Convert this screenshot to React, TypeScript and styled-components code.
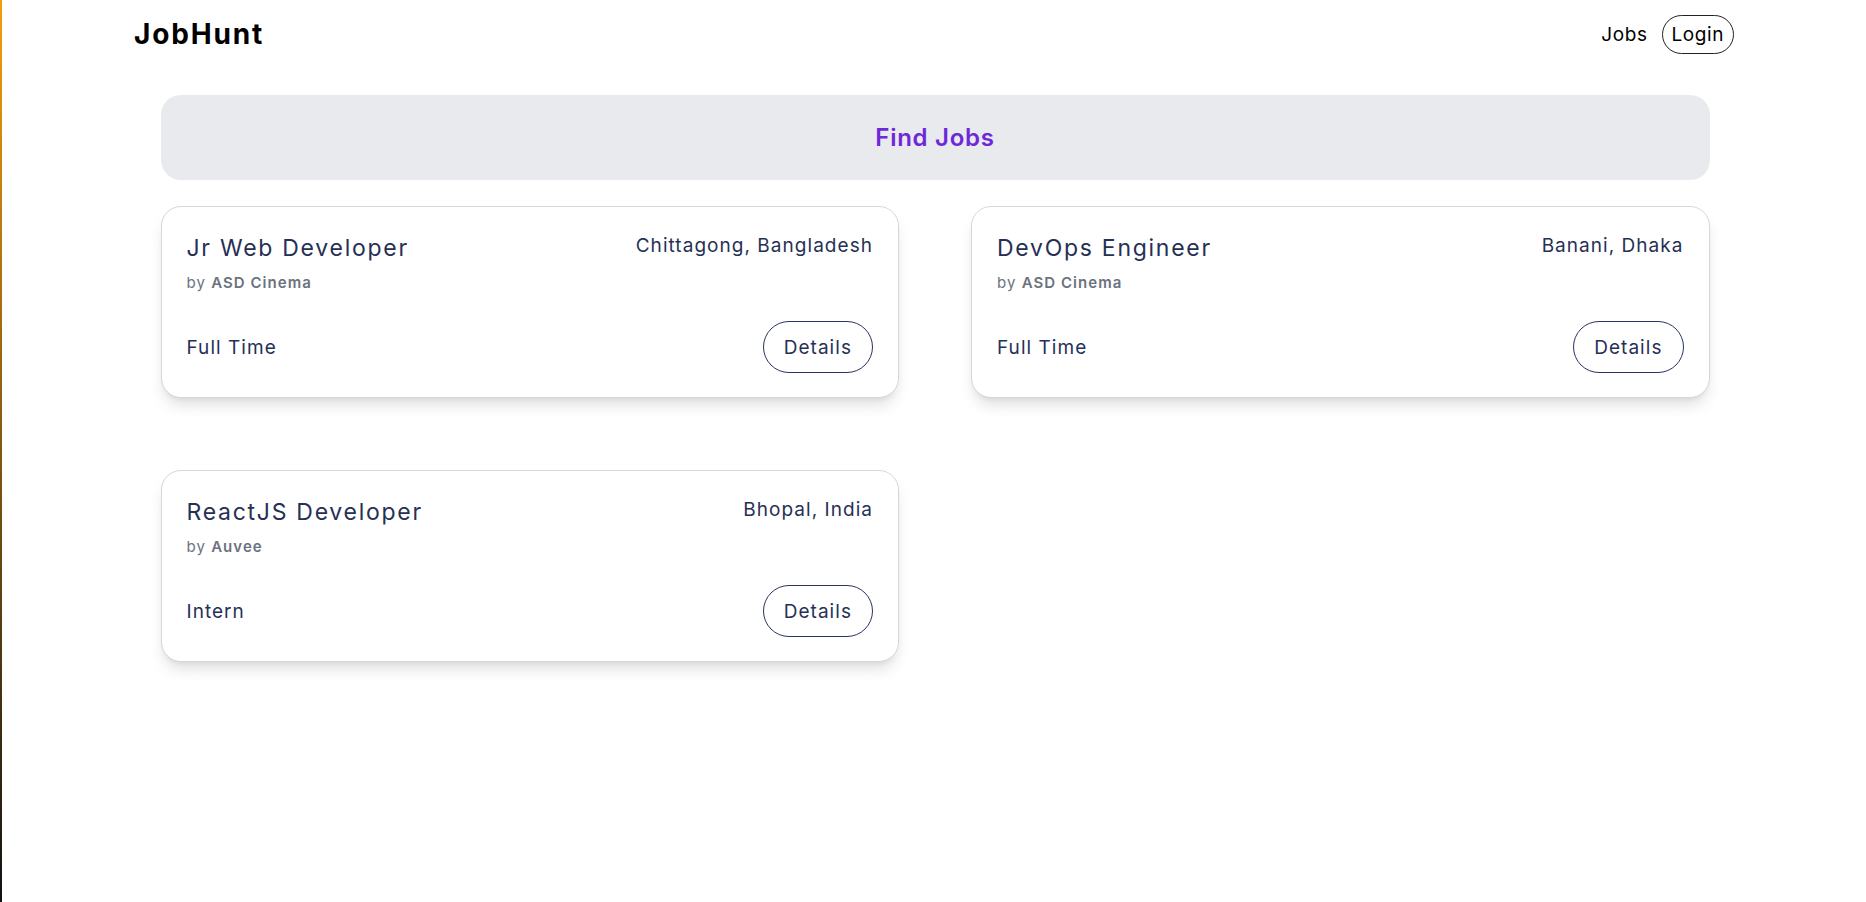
import styled, { createGlobalStyle } from "styled-components";

type Job = {
  title: string;
  company: string;
  location: string;
  type: string;
};

const jobs: Job[] = [
  { title: "Jr Web Developer", company: "ASD Cinema", location: "Chittagong, Bangladesh", type: "Full Time" },
  { title: "DevOps Engineer", company: "ASD Cinema", location: "Banani, Dhaka", type: "Full Time" },
  { title: "ReactJS Developer", company: "Auvee", location: "Bhopal, India", type: "Intern" },
];

// CSS
const GlobalStyle = createGlobalStyle`
  * {
    box-sizing: border-box;
  }
  body {
    margin: 0;
    min-height: 902px;
    background: #ffffff;
    font-family: Inter, "Open Sans", sans-serif;
    letter-spacing: 0.065em;
    border-left: 2px solid;
    border-image: linear-gradient(180deg, #f59e0b 0%, #6b4a12 60%, #111111 100%) 1;
  }
`;

const Header = styled.header`
  width: 1600px;
  margin: 0 auto;
  height: 68px;
  display: flex;
  justify-content: space-between;
  align-items: center;
`;

const Logo = styled.div`
  font-size: 28px;
  font-weight: 700;
  color: #000;
  letter-spacing: 0.065em;
`;

const Nav = styled.nav`
  display: flex;
  align-items: center;
  gap: 14px;
  font-size: 19px;
  letter-spacing: 0.03em;
  color: #000;
`;

const NavLink = styled.a<{ $pill?: boolean }>`
  color: inherit;
  text-decoration: none;
  padding: ${(props) => (props.$pill ? "7px 9px" : "0")};
  border: ${(props) => (props.$pill ? "1px solid #222" : "none")};
  border-radius: 999px;
`;

const Main = styled.main`
  width: 1549px;
  margin: 27px auto 0;
  transform: translateX(1px);
`;

const Banner = styled.div`
  height: 85px;
  border-radius: 20px;
  background: #e9eaee;
  display: flex;
  align-items: center;
  justify-content: center;
  font-size: 24px;
  font-weight: 600;
  letter-spacing: 0.03em;
  color: #6d28d9;
`;

const Grid = styled.div`
  margin-top: 26px;
  display: grid;
  grid-template-columns: 1fr 1fr;
  gap: 72px 72px;
`;

const Card = styled.div`
  border: 1px solid #d6d7dc;
  border-radius: 20px;
  background: #fff;
  padding: 25px 25px 24px 25px;
  box-shadow: 0 10px 15px -3px rgba(0, 0, 0, 0.12), 0 4px 6px -4px rgba(0, 0, 0, 0.1);
  color: #263055;
`;

const Row = styled.div<{ $bottom?: boolean }>`
  display: flex;
  justify-content: space-between;
  align-items: ${(props) => (props.$bottom ? "center" : "flex-start")};
  margin-top: ${(props) => (props.$bottom ? "28px" : "0")};
`;

const Title = styled.div`
  font-size: 23px;
  line-height: 33px;
  font-weight: 400;
  letter-spacing: 0.075em;
`;

const By = styled.div`
  margin-top: 7px;
  font-size: 15px;
  line-height: 21px;
  color: #6b7280;

  b {
    font-weight: 600;
  }
`;

const Location = styled.div`
  font-size: 19px;
  line-height: 27px;
`;

const Type = styled.div`
  font-size: 19px;
`;

const Details = styled.button`
  height: 52px;
  padding: 0 20px;
  border: 1px solid #2b3460;
  border-radius: 999px;
  background: transparent;
  font-family: inherit;
  font-size: 19px;
  letter-spacing: 0.055em;
  color: #263055;
  cursor: pointer;
`;

function JobCard({ title, company, location, type }: Job) {
  return (
    <Card>
      <Row>
        <div>
          <Title>{title}</Title>
          <By>
            by <b>{company}</b>
          </By>
        </div>
        <Location>{location}</Location>
      </Row>
      <Row $bottom>
        <Type>{type}</Type>
        <Details>Details</Details>
      </Row>
    </Card>
  );
}

function App() {
  return (
    <>
      <GlobalStyle />
      <Header>
        <Logo>JobHunt</Logo>
        <Nav>
          <NavLink>Jobs</NavLink>
          <NavLink $pill>Login</NavLink>
        </Nav>
      </Header>
      <Main>
        <Banner>Find Jobs</Banner>
        <Grid>
          {jobs.map((job) => (
            <JobCard key={job.title} {...job} />
          ))}
        </Grid>
      </Main>
    </>
  );
}
export default App;
